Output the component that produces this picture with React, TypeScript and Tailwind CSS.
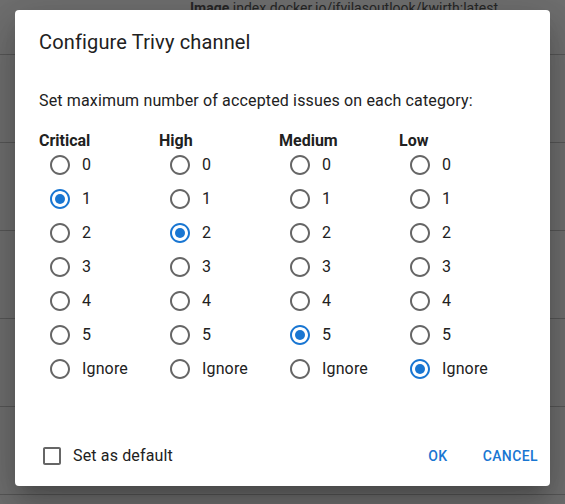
import React from "react";

const cats: { name: string; sel: string }[] = [
  { name: "Critical", sel: "1" },
  { name: "High", sel: "2" },
  { name: "Medium", sel: "5" },
  { name: "Low", sel: "Ignore" },
];
const opts = ["0", "1", "2", "3", "4", "5", "Ignore"];

function Radio({ checked }: { checked: boolean }) {
  return (
    <svg width="24" height="24" viewBox="0 0 24 24" className="shrink-0">
      <path
        fill={checked ? "#1976d2" : "#666666"}
        d="M12 2C6.48 2 2 6.48 2 12s4.48 10 10 10 10-4.48 10-10S17.52 2 12 2zm0 18c-4.42 0-8-3.58-8-8s3.58-8 8-8 8 3.58 8 8-3.58 8-8 8z"
      />
      {checked && <circle cx="12" cy="12" r="5" fill="#1976d2" />}
    </svg>
  );
}

export default function App() {
  return (
    <div
      className="relative w-[565px] h-[504px] overflow-hidden bg-[#6f6f6f]"
      style={{ fontFamily: "Roboto, 'Liberation Sans', sans-serif" }}
    >
      {/* background page rows */}
      <div className="flex flex-col">
        <div className="h-[55px] border-b border-[#575757]">
          <div className="pl-[190px] mt-[-2px] text-[14px] leading-5 text-[#262626] whitespace-nowrap">
            <span className="font-bold">Image</span> index.docker.io/ifvilasoutlook/kwirth:latest
          </div>
        </div>
        <div className="h-[88px] border-b border-[#575757]" />
        <div className="h-[88px] border-b border-[#575757]" />
        <div className="h-[88px] border-b border-[#575757]" />
        <div className="h-[88px] border-b border-[#575757]" />
        <div className="h-[88px] border-b border-[#575757]" />
      </div>

      {/* dialog */}
      <div className="absolute left-[15px] top-[10px] w-[535px] h-[476px] bg-white rounded flex flex-col text-[#212121] shadow-[0px_11px_15px_-7px_rgba(0,0,0,0.2),0px_24px_38px_3px_rgba(0,0,0,0.14),0px_9px_46px_8px_rgba(0,0,0,0.12)]">
        <div className="px-6 py-4 text-[20px] leading-8 tracking-[0.15px]">Configure Trivy channel</div>
        <div className="px-6 pt-[15px]">
          <div className="text-[16px] leading-6 tracking-[0.15px]">
            Set maximum number of accepted issues on each category:
          </div>
          <div className="mt-5 flex">
            {cats.map((c) => (
              <div key={c.name} className="w-[120px] flex flex-col">
                <div className="h-[15px] leading-4 text-[16px] font-bold">{c.name}</div>
                {opts.map((o) => (
                  <div key={o} className="h-[34px] flex items-center pl-[9px]">
                    <Radio checked={o === c.sel} />
                    <span className="ml-[10px] text-[16px] leading-6 tracking-[0.15px]">{o}</span>
                  </div>
                ))}
              </div>
            ))}
          </div>
        </div>
        <div className="mt-auto mb-3 h-9 flex items-center pl-[25px] pr-3">
          <svg width="24" height="24" viewBox="0 0 24 24" className="shrink-0">
            <path
              fill="#666666"
              d="M19 5v14H5V5h14m0-2H5c-1.1 0-2 .9-2 2v14c0 1.1.9 2 2 2h14c1.1 0 2-.9 2-2V5c0-1.1-.9-2-2-2z"
            />
          </svg>
          <span className="ml-[9px] text-[16px] leading-6 tracking-[0.15px]">Set as default</span>
          <div className="ml-auto flex items-center gap-[35px] text-[14px] font-medium tracking-[0.4px] text-[#1976d2] uppercase">
            <span>OK</span>
            <span>Cancel</span>
          </div>
        </div>
      </div>
    </div>
  );
}
